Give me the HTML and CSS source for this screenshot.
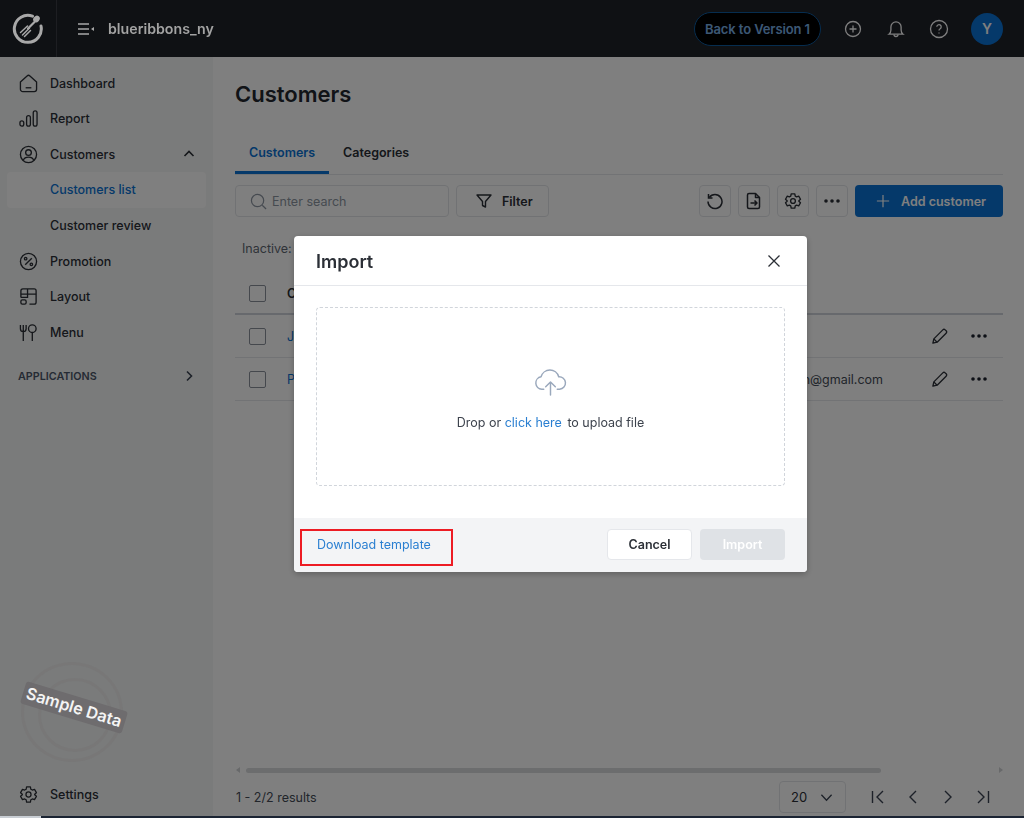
FILE: index.html
```html
<!DOCTYPE html>
<html lang="en">

<head>
    <meta charset="UTF-8">
    <meta name="viewport" content="width=device-width, initial-scale=1.0">
    <title>Customers</title>
    <link rel="stylesheet" href="styles.css">
</head>

<body>
    <header class="topbar">
        <div class="logo-box">
            <svg class="logo" viewBox="0 0 32 32" fill="none" stroke="currentColor" stroke-linecap="round">
                <path d="M20.5 3.2A13.5 13.5 0 1 0 29 13" stroke-width="3" />
                <ellipse cx="24.5" cy="6" rx="3" ry="3.6" transform="rotate(40 24.5 6)" fill="currentColor" stroke="none" />
                <path d="M22.5 9 16 15.500" stroke-width="2.2" />
                <path d="M15.5 13 8.500 19.500M17.500 15 10.500 22M18.500 17.500 12.500 23.500" stroke-width="1.5" />
            </svg>
        </div>
        <svg class="menu-toggle" viewBox="0 0 18 14" fill="none" stroke="currentColor" stroke-width="1.6">
            <path d="M1 2h11M1 7h11M1 12h11" />
            <path d="M17 5v4l-3-2z" fill="currentColor" stroke="none" />
        </svg>
        <span class="brand-name">blueribbons_ny</span>
        <div class="topbar-right">
            <a class="back-btn">Back to Version 1</a>
            <svg class="top-icon" viewBox="0 0 20 20" fill="none" stroke="currentColor" stroke-width="1.3">
                <circle cx="10" cy="10" r="7.5" />
                <path d="M10 6.500v7M6.500 10h7" />
            </svg>
            <svg class="top-icon" viewBox="0 0 20 20" fill="none" stroke="currentColor" stroke-width="1.3">
                <path d="M3 15.200c1.300-1 1.900-2.200 1.900-4.200V8a5.100 5.100 0 0 1 10.200 0v3c0 2 .6 3.200 1.900 4.200z" />
                <path d="M8 15.500a2 2 0 0 0 4 0" />
            </svg>
            <svg class="top-icon" viewBox="0 0 20 20" fill="none" stroke="currentColor" stroke-width="1.3">
                <circle cx="10" cy="10" r="8.5" />
                <path d="M7.800 7.800a2.200 2.200 0 1 1 3.400 1.900c-.8.500-1.200 1-1.200 1.900" />
                <path d="M10 13.600v1" />
            </svg>
            <span class="avatar">Y</span>
        </div>
    </header>

    <div class="app">
        <aside class="sidebar">
            <a class="nav-item">
                <svg class="nav-icon" viewBox="0 0 20 20" fill="none" stroke="currentColor" stroke-width="1.4">
                    <path d="M1.500 8.500 8.500 2a2.200 2.200 0 0 1 3 0l7 6.500V16a2.500 2.500 0 0 1-2.500 2.500H4A2.500 2.500 0 0 1 1.500 16z" stroke-linejoin="round" />
                    <path d="M7 14.500h6" />
                </svg>
                Dashboard
            </a>
            <a class="nav-item">
                <svg class="nav-icon" viewBox="0 0 20 20" fill="none" stroke="currentColor" stroke-width="1.4">
                    <rect x="1" y="12.5" width="4" height="5.5" rx="2" />
                    <rect x="8" y="7" width="4" height="11" rx="2" />
                    <rect x="15" y="2" width="4" height="16" rx="2" />
                </svg>
                Report
            </a>
            <a class="nav-item">
                <svg class="nav-icon" viewBox="0 0 20 20" fill="none" stroke="currentColor" stroke-width="1.4">
                    <circle cx="10" cy="10" r="8.5" />
                    <circle cx="10" cy="8" r="3" />
                    <path d="M4.500 16c1-2.500 3-3.200 5.500-3.200s4.500.7 5.500 3.200" />
                </svg>
                Customers
                <svg class="nav-caret" viewBox="0 0 12 12" fill="none" stroke="currentColor" stroke-width="1.6">
                    <path d="M1.500 8 6 3.500 10.500 8" />
                </svg>
            </a>
            <a class="nav-item sub active">Customers list</a>
            <a class="nav-item sub">Customer review</a>
            <a class="nav-item">
                <svg class="nav-icon" viewBox="0 0 20 20" fill="none" stroke="currentColor" stroke-width="1.4">
                    <circle cx="10" cy="10" r="8.5" />
                    <path d="M13.500 6.500l-7 7" />
                    <circle cx="7" cy="7" r="1.3" />
                    <circle cx="13" cy="13" r="1.3" />
                </svg>
                Promotion
            </a>
            <a class="nav-item">
                <svg class="nav-icon" viewBox="0 0 20 20" fill="none" stroke="currentColor" stroke-width="1.4">
                    <path d="M2 11V4a2 2 0 0 1 2-2h12a2 2 0 0 1 2 2v12a2 2 0 0 1-2 2h-5" />
                    <path d="M2 7.500h16M9 2v9.500M2 11h7" />
                    <rect x="2" y="13.5" width="5.5" height="4.5" rx="1.5" />
                </svg>
                Layout
            </a>
            <a class="nav-item">
                <svg class="nav-icon" viewBox="0 0 20 20" fill="none" stroke="currentColor" stroke-width="1.4">
                    <path d="M1.500 2v4a3 3 0 0 0 6 0V2M4.500 2v17" />
                    <circle cx="14" cy="6" r="4" />
                    <path d="M14 10v9" />
                </svg>
                Menu
            </a>
            <div class="nav-group">
                APPLICATIONS
                <svg class="nav-caret" viewBox="0 0 12 12" fill="none" stroke="currentColor" stroke-width="1.6">
                    <path d="M4 1.500 8.500 6 4 10.500" />
                </svg>
            </div>

            <div class="stamp">
                <span class="stamp-ribbon">Sample Data</span>
            </div>

            <a class="nav-item settings">
                <svg class="nav-icon" viewBox="0 0 24 24" fill="none" stroke="currentColor" stroke-width="1.6" stroke-linejoin="round">
                    <circle cx="12" cy="12" r="3.2" />
                    <path d="M9.600 2.500h4.800l.6 2.900 1.800 1 2.800-.9 2.400 4.200-2.200 2 0 .6 2.200 2-2.400 4.200-2.800-.9-1.800 1-.6 2.900H9.600L9 18.600l-1.800-1-2.800.9L2 14.300l2.200-2v-.6L2 9.700l2.400-4.200 2.800.9 1.800-1z" />
                </svg>
                Settings
            </a>
        </aside>

        <main class="content">
            <h1 class="page-title">Customers</h1>

            <div class="tabs">
                <span class="tab active">Customers</span>
                <span class="tab">Categories</span>
            </div>

            <div class="toolbar">
                <div class="search">
                    <svg class="search-icon" viewBox="0 0 18 18" fill="none" stroke="currentColor" stroke-width="1.3">
                        <circle cx="8" cy="8" r="6.5" />
                        <path d="m13 13 4 4" />
                    </svg>
                    <span class="search-text">Enter search</span>
                </div>
                <button class="btn filter-btn">
                    <svg class="btn-icon" viewBox="0 0 18 18" fill="none" stroke="currentColor" stroke-width="1.4" stroke-linejoin="round">
                        <path d="M2 3h14l-5.500 6.500V15l-3-1.500v-4z" />
                    </svg>
                    Filter
                </button>
                <div class="toolbar-right">
                    <button class="icon-btn">
                        <svg class="btn-icon" viewBox="0 0 18 18" fill="none" stroke="currentColor" stroke-width="1.5">
                            <path d="M3.300 5.500A7 7 0 1 1 2 9.500" />
                            <path d="M2.500 2v4h4" />
                        </svg>
                    </button>
                    <button class="icon-btn">
                        <svg class="btn-icon" viewBox="0 0 18 18" fill="none" stroke="currentColor" stroke-width="1.5" stroke-linejoin="round">
                            <path d="M4 1.500h6.500l4 4V15a1.500 1.500 0 0 1-1.500 1.500H4A1.500 1.500 0 0 1 2.500 15V3A1.500 1.500 0 0 1 4 1.500z" />
                            <path d="M10.500 1.500v4h4M5.500 11h6M9.500 8.500 12 11l-2.500 2.500" />
                        </svg>
                    </button>
                    <button class="icon-btn">
                        <svg class="btn-icon" viewBox="0 0 24 24" fill="none" stroke="currentColor" stroke-width="1.8" stroke-linejoin="round">
                            <circle cx="12" cy="12" r="3.2" />
                            <path d="M9.600 2.500h4.800l.6 2.900 1.800 1 2.800-.9 2.400 4.200-2.200 2 0 .6 2.200 2-2.400 4.200-2.800-.9-1.800 1-.6 2.900H9.600L9 18.600l-1.800-1-2.800.9L2 14.300l2.200-2v-.6L2 9.700l2.400-4.200 2.800.9 1.800-1z" />
                        </svg>
                    </button>
                    <button class="icon-btn">
                        <svg class="btn-icon" viewBox="0 0 18 18" fill="currentColor">
                            <circle cx="3" cy="9" r="1.8" />
                            <circle cx="9" cy="9" r="1.8" />
                            <circle cx="15" cy="9" r="1.8" />
                        </svg>
                    </button>
                    <button class="btn-primary">
                        <svg class="plus-icon" viewBox="0 0 16 16" fill="none" stroke="currentColor" stroke-width="1.4">
                            <path d="M8 1v14M1 8h14" />
                        </svg>
                        Add customer
                    </button>
                </div>
            </div>

            <div class="inactive">Inactive:</div>

            <div class="table">
                <div class="row head">
                    <span class="check"></span>
                    <span class="cell-name">Customer</span>
                </div>
                <div class="row">
                    <span class="check"></span>
                    <a class="cell-name link">James</a>
                    <span class="cell-actions">
                        <svg class="pencil" viewBox="0 0 18 18" fill="none" stroke="currentColor" stroke-width="1.4" stroke-linejoin="round">
                            <path d="M2 16l1-4.500L12.500 2a1.800 1.800 0 0 1 2.500 0l1 1a1.800 1.800 0 0 1 0 2.500L6.500 15z" />
                            <path d="M3 11.500 6.500 15" />
                        </svg>
                        <svg class="dots" viewBox="0 0 18 18" fill="currentColor">
                            <circle cx="3" cy="9" r="1.8" />
                            <circle cx="9" cy="9" r="1.8" />
                            <circle cx="15" cy="9" r="1.8" />
                        </svg>
                    </span>
                </div>
                <div class="row">
                    <span class="check"></span>
                    <a class="cell-name link">Peter</a>
                    <span class="cell-email">peter.nguyen@gmail.com</span>
                    <span class="cell-actions">
                        <svg class="pencil" viewBox="0 0 18 18" fill="none" stroke="currentColor" stroke-width="1.4" stroke-linejoin="round">
                            <path d="M2 16l1-4.500L12.500 2a1.800 1.800 0 0 1 2.500 0l1 1a1.800 1.800 0 0 1 0 2.500L6.500 15z" />
                            <path d="M3 11.500 6.500 15" />
                        </svg>
                        <svg class="dots" viewBox="0 0 18 18" fill="currentColor">
                            <circle cx="3" cy="9" r="1.8" />
                            <circle cx="9" cy="9" r="1.8" />
                            <circle cx="15" cy="9" r="1.8" />
                        </svg>
                    </span>
                </div>
            </div>

            <div class="scrollbar">
                <span class="scroll-arrow left"></span>
                <span class="scroll-track"><span class="scroll-thumb"></span></span>
                <span class="scroll-arrow right"></span>
            </div>

            <div class="table-footer">
                <span class="results">1 - 2/2 results</span>
                <div class="page-size">
                    20
                    <svg class="page-caret" viewBox="0 0 14 14" fill="none" stroke="currentColor" stroke-width="1.4">
                        <path d="M1.500 4 7 10l5.500-6" />
                    </svg>
                </div>
                <div class="pager">
                    <svg class="pager-icon" viewBox="0 0 14 14" fill="none" stroke="currentColor" stroke-width="1.4">
                        <path d="M1.500 1v12M12 1 6 7l6 6" />
                    </svg>
                    <svg class="pager-icon" viewBox="0 0 14 14" fill="none" stroke="currentColor" stroke-width="1.4">
                        <path d="M10 1 4 7l6 6" />
                    </svg>
                    <svg class="pager-icon" viewBox="0 0 14 14" fill="none" stroke="currentColor" stroke-width="1.4">
                        <path d="M4 1l6 6-6 6" />
                    </svg>
                    <svg class="pager-icon" viewBox="0 0 14 14" fill="none" stroke="currentColor" stroke-width="1.4">
                        <path d="M12.500 1v12M2 1l6 6-6 6" />
                    </svg>
                </div>
            </div>
        </main>
    </div>

    <div class="backdrop"></div>

    <div class="modal">
        <div class="modal-header">
            <h2 class="modal-title">Import</h2>
            <svg class="modal-close" viewBox="0 0 14 14" fill="none" stroke="currentColor" stroke-width="1.3">
                <path d="M1.500 1.500l11 11M12.500 1.500l-11 11" />
            </svg>
        </div>
        <div class="modal-body">
            <div class="dropzone">
                <svg class="cloud" viewBox="0 0 34 28" fill="none" stroke="currentColor" stroke-width="1.5" stroke-linecap="round" stroke-linejoin="round">
                    <path d="M10 21H8a6.500 6.500 0 0 1-.8-12.900A9.500 9.500 0 0 1 25.500 8 6.500 6.500 0 0 1 26.500 21H24" />
                    <path d="M17 27V14M12 18.500l5-5 5 5" />
                </svg>
                <p class="drop-text">Drop or <a class="drop-link">click here</a> to upload file</p>
            </div>
        </div>
        <div class="modal-footer">
            <a class="template-link">Download template</a>
            <div class="modal-actions">
                <button class="btn-cancel">Cancel</button>
                <button class="btn-import">Import</button>
            </div>
        </div>
    </div>

    <div class="taskbar"><span class="taskbar-start"></span></div>
</body>

</html>
```

FILE: styles.css
```css
* {
    box-sizing: border-box;
}

html,
body {
    margin: 0;
    height: 100%;
}

body {
    display: flex;
    flex-direction: column;
    overflow: hidden;
    font-family: Inter, "Liberation Sans", sans-serif;
    font-size: 12.5px;
    color: #2b2f36;
    background: #fff;
}

button {
    font-family: inherit;
}

/* topbar */
.topbar {
    display: flex;
    align-items: center;
    flex: none;
    height: 57px;
    color: #fff;
    background: #1f2229;
}

.logo-box {
    display: flex;
    align-items: center;
    justify-content: center;
    width: 57px;
    height: 57px;
    border-right: 1px solid #3a3d44;
}

.logo {
    position: relative;
    z-index: 11;
    width: 32px;
    height: 32px;
    color: #a8a8a8;
}

.menu-toggle {
    position: relative;
    z-index: 11;
    width: 18px;
    height: 14px;
    margin: 0 13px 0 20px;
    color: #a8a8a8;
}

.brand-name {
    position: relative;
    z-index: 11;
    font-size: 14.2px;
    font-weight: 600;
    color: #a3a3a3;
}

.topbar-right {
    display: flex;
    align-items: center;
    margin-left: auto;
    padding-right: 21px;
}

.back-btn {
    display: flex;
    align-items: center;
    height: 34px;
    padding: 1px 10px 0;
    margin-right: 22px;
    border: 1px solid #0d5a9e;
    border-radius: 17px;
    font-size: 13px;
    font-weight: 600;
    letter-spacing: -.1px;
    color: #7ab0e8;
    background: #000;
}

.top-icon {
    width: 20px;
    height: 20px;
    margin-right: 23px;
}

.top-icon:nth-of-type(3) {
    margin-right: 22px;
}

.avatar {
    display: flex;
    align-items: center;
    justify-content: center;
    width: 32px;
    height: 32px;
    border-radius: 50%;
    font-size: 14px;
    font-weight: 600;
    background: #0a72d4;
}

.app {
    display: flex;
    flex: 1;
    min-height: 0;
}

/* sidebar */
.sidebar {
    position: relative;
    display: flex;
    flex-direction: column;
    flex: none;
    width: 213px;
    padding: 8.4px 7px 6px;
    background: #f5f7f6;
}

.nav-item {
    display: flex;
    align-items: center;
    flex: none;
    height: 35.6px;
    padding-left: 12px;
    border-radius: 4px;
    font-weight: 500;
    color: #2b2f36;
}

.nav-item.sub {
    padding-left: 43px;
}

.nav-item.active {
    color: #0a72d4;
    background: #fff;
}

.nav-icon {
    width: 19px;
    height: 19px;
    margin-right: 12px;
    flex: none;
}

.nav-caret {
    width: 12px;
    height: 12px;
    margin-left: auto;
    margin-right: 11px;
}

.nav-group {
    display: flex;
    align-items: center;
    height: 16px;
    margin-top: 18px;
    padding-left: 11px;
    font-size: 10.75px;
    font-weight: 600;
    color: #4a5568;
}

.nav-group .nav-caret {
    color: #3a4352;
}

.settings {
    margin-top: auto;
}

.stamp {
    position: absolute;
    left: 21px;
    top: 605px;
    z-index: 11;
    width: 102px;
    height: 100px;
    border: 3px solid rgba(110, 105, 105, .18);
    border-radius: 50%;
}

.stamp::before {
    content: "";
    position: absolute;
    left: 14px;
    top: 13px;
    width: 68px;
    height: 68px;
    border: 3px solid rgba(110, 105, 105, .18);
    border-radius: 50%;
}

.stamp-ribbon {
    position: absolute;
    left: -3px;
    top: 31px;
    width: 106px;
    padding: 2px 0;
    border-radius: 3px;
    font-size: 16.3px;
    font-weight: 600;
    line-height: 19px;
    text-align: center;
    white-space: nowrap;
    color: #f4f4f4;
    background: #6e6c6e;
    transform: rotate(17deg);
}

/* content */
.content {
    display: flex;
    flex-direction: column;
    flex: 1;
    min-width: 0;
    padding: 0 21px 5px 22px;
}

.page-title {
    margin: 23px 0 0;
    font-size: 22px;
    font-weight: 600;
    line-height: 28px;
    color: #23272e;
}

.tabs {
    display: flex;
    margin-top: 26px;
    border-bottom: 1px solid #e5e7eb;
}

.tab {
    height: 40px;
    padding: 0 14px;
    font-weight: 600;
    line-height: 38px;
    color: #2b2f36;
}

.tab.active {
    color: #0a72d4;
    border-bottom: 3px solid #0a72d4;
    margin-bottom: -1px;
}

.toolbar {
    display: flex;
    align-items: center;
    margin-top: 10px;
}

.search {
    display: flex;
    align-items: center;
    width: 214px;
    height: 32px;
    padding-left: 14px;
    border: 1px solid #e2e5e9;
    border-radius: 4px;
    color: #8c95a1;
}

.search-icon {
    width: 17px;
    height: 17px;
    margin-right: 5px;
}

.search-text {
    padding-top: 1px;
}

.btn {
    display: flex;
    align-items: center;
    height: 32px;
    margin-left: 7px;
    padding: 0 15px 0 18px;
    border: 1px solid #e2e5e9;
    border-radius: 4px;
    font-size: 12.5px;
    font-weight: 600;
    color: #2b2f36;
    background: #fff;
}

.btn .btn-icon {
    margin-right: 9px;
}

.toolbar-right {
    display: flex;
    align-items: center;
    margin-left: auto;
    gap: 7px;
}

.icon-btn {
    display: flex;
    align-items: center;
    justify-content: center;
    width: 32px;
    height: 32px;
    padding: 0;
    border: 1px solid #e2e5e9;
    border-radius: 4px;
    color: #2b2f36;
    background: #fff;
}

.btn-icon {
    width: 18px;
    height: 18px;
}

.btn-primary {
    display: flex;
    align-items: center;
    height: 32px;
    padding: 0 17px 0 21px;
    border: 0;
    border-radius: 4px;
    font-size: 12.5px;
    font-weight: 600;
    color: #fff;
    background: #0a72d4;
}

.plus-icon {
    width: 14px;
    height: 14px;
    margin-right: 11px;
}

.inactive {
    margin: 24px 0 0 7px;
    line-height: 16px;
    color: #5f6773;
}

.table {
    margin-top: 16px;
    flex: 1;
}

.row {
    display: flex;
    align-items: center;
    height: 43px;
    padding-left: 14px;
    border-bottom: 1px solid #e5e7eb;
}

.row.head {
    height: 42px;
    padding-top: 1px;
    border-bottom: 2px solid #cfd3da;
    font-weight: 600;
}

.check {
    flex: none;
    width: 17px;
    height: 17px;
    margin-right: 21px;
    border: 1.5px solid #8a909b;
    border-radius: 2px;
    background: #fff;
}

.link {
    color: #0a72d4;
}

.cell-email {
    margin-left: auto;
    margin-right: 48px;
    color: #444b56;
}

.cell-actions {
    display: flex;
    align-items: center;
    gap: 22px;
    margin-left: auto;
    padding-right: 15px;
    color: #2b2f36;
}

.cell-email + .cell-actions {
    margin-left: 0;
}

.pencil {
    width: 17px;
    height: 17px;
}

.dots {
    width: 18px;
    height: 18px;
    color: #1a202c;
}

.scrollbar {
    display: flex;
    align-items: center;
    gap: 6px;
    height: 6px;
    margin-left: 1px;
}

.scroll-track {
    flex: 1;
    height: 5px;
}

.scroll-thumb {
    display: block;
    width: 635px;
    height: 5px;
    border-radius: 3px;
    background: #d8dadd;
}

.scroll-arrow {
    flex: none;
    width: 0;
    height: 0;
    border-top: 3px solid transparent;
    border-bottom: 3px solid transparent;
}

.scroll-arrow.left {
    border-right: 4px solid #d0d2d5;
}

.scroll-arrow.right {
    border-left: 4px solid #d0d2d5;
}

.table-footer {
    display: flex;
    align-items: center;
    height: 32px;
    margin-top: 8px;
}

.results {
    margin: 1px 0 0 1px;
    color: #444b56;
}

.page-size {
    display: flex;
    align-items: center;
    justify-content: space-between;
    width: 67px;
    height: 32px;
    margin-left: auto;
    margin-right: 25px;
    padding: 0 12px 0 11px;
    border: 1px solid #e2e5e9;
    border-radius: 4px;
    font-size: 13px;
}

.page-caret {
    width: 13px;
    height: 13px;
    color: #3a4352;
}

.pager {
    display: flex;
    align-items: center;
    gap: 21px;
    margin-right: 13px;
}

.pager-icon {
    width: 14px;
    height: 14px;
    color: #3a4352;
}

/* modal */
.backdrop {
    position: fixed;
    inset: 0;
    z-index: 10;
    background: rgba(0, 0, 0, .5);
}

.modal {
    position: fixed;
    left: 294px;
    top: 236px;
    z-index: 20;
    display: flex;
    flex-direction: column;
    width: 513px;
    height: 336px;
    border-radius: 4px;
    overflow: hidden;
    background: #fff;
    box-shadow: 0 2px 6px rgba(0, 0, 0, .25);
}

.modal-header {
    display: flex;
    align-items: center;
    justify-content: space-between;
    flex: none;
    height: 50px;
    padding: 1px 26px 0 22px;
    border-bottom: 1px solid #e5e7eb;
}

.modal-title {
    margin: 0;
    font-size: 18px;
    font-weight: 600;
    color: #2b2f36;
}

.modal-close {
    width: 14px;
    height: 14px;
    color: #2b2f36;
}

.modal-body {
    flex: 1;
    padding: 21px 22px 32px;
}

.dropzone {
    display: flex;
    flex-direction: column;
    align-items: center;
    height: 179px;
    padding-top: 61px;
    border: 1px dashed #d1d5db;
    border-radius: 4px;
}

.cloud {
    width: 33px;
    height: 27px;
    color: #9aa8bc;
}

.drop-text {
    margin: 18px 0 0;
    line-height: 18px;
    color: #3d434d;
}

.drop-link {
    margin-right: 2px;
    color: #2a7fd1;
}

.modal-footer {
    display: flex;
    align-items: flex-start;
    justify-content: space-between;
    flex: none;
    height: 54px;
    padding: 11px 22px 0 6px;
    background: #f3f4f6;
}

.template-link {
    display: flex;
    align-items: center;
    width: 153px;
    height: 37px;
    padding: 0 0 6px 15px;
    border: 2px solid #ed1c24;
    color: #2a7fd1;
}

.modal-actions {
    display: flex;
    gap: 8px;
}

.btn-cancel,
.btn-import {
    width: 85px;
    height: 31px;
    padding: 0;
    border-radius: 4px;
    font-size: 12.5px;
    font-weight: 600;
}

.btn-cancel {
    border: 1px solid #e5e7eb;
    color: #2b2f36;
    background: #fff;
}

.btn-import {
    border: 0;
    color: #fff;
    background: #dfe2e6;
}

.taskbar {
    position: fixed;
    left: 0;
    right: 0;
    bottom: 0;
    z-index: 30;
    height: 2px;
    background: #1b2433;
}

.taskbar-start {
    display: block;
    width: 41px;
    height: 2px;
    background: #c9ced4;
}
```
